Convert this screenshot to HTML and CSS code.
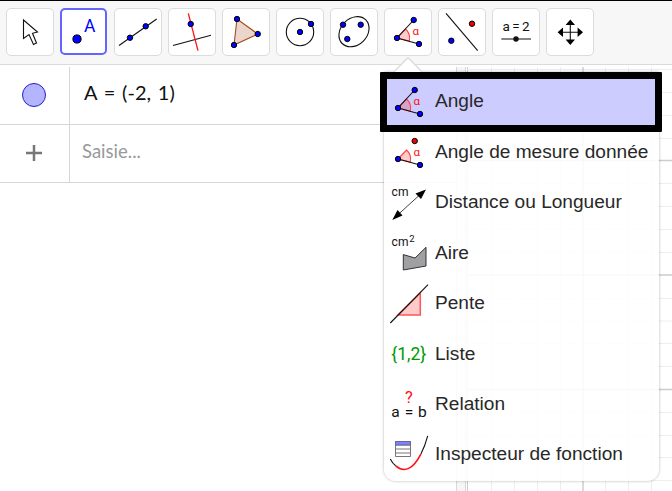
FILE: index.html
```html
<!DOCTYPE html>
<html lang="fr">
<head>
<meta charset="utf-8">
<title>GeoGebra</title>
<link rel="stylesheet" href="styles.css">
</head>
<body>
<div class="app">
  <header class="toolbar">
    <button class="tool"><svg viewBox="0 0 48 48"><path class="outline" d="M17.500 12V30.500L23 26.500L27.500 36.500L30.500 35L26.500 25.300L31.500 24Z"/></svg></button>
    <button class="tool selected"><svg viewBox="0 0 48 48"><circle class="pt" cx="17" cy="31" r="4.100"/><text class="blue" x="24" y="24" font-size="17.500" textLength="12">A</text></svg></button>
    <button class="tool"><svg viewBox="0 0 48 48"><path class="line" d="M5 37.500L42.700 11"/><circle class="pt" cx="16" cy="29.700" r="2.700"/><circle class="pt" cx="31.700" cy="18.300" r="2.700"/></svg></button>
    <button class="tool"><svg viewBox="0 0 48 48"><path class="line" d="M5 37.500L43 27.300"/><path class="redline" d="M20.300 5.300L30 42.700"/><circle class="pt" cx="22.700" cy="16" r="2.700"/></svg></button>
    <button class="tool"><svg viewBox="0 0 48 48"><path class="triangle" d="M15 11L35.700 26L12 37Z"/><circle class="pt" cx="15" cy="11" r="2.700"/><circle class="pt" cx="35.700" cy="26" r="2.700"/><circle class="pt" cx="12" cy="37" r="2.700"/></svg></button>
    <button class="tool"><svg viewBox="0 0 48 48"><circle class="line" cx="24" cy="24" r="13.700"/><circle class="pt" cx="24" cy="24" r="2.700"/><circle class="pt" cx="35" cy="16" r="2.700"/></svg></button>
    <button class="tool"><svg viewBox="0 0 48 48"><ellipse class="line" cx="24" cy="23.700" rx="16.700" ry="13.200" transform="rotate(-45 24 23.700)"/><circle class="pt" cx="13" cy="16.700" r="2.700"/><circle class="pt" cx="30.700" cy="16.700" r="2.700"/><circle class="pt" cx="17.300" cy="31" r="2.700"/></svg></button>
    <button class="tool"><svg viewBox="0 0 48 48"><path class="sector" d="M13 30L21.500 21A12.500 12.500 0 0 1 25.300 33Z"/><path class="line" d="M29.700 12L13 30L35 36"/><circle class="pt" cx="13" cy="30" r="2.700"/><circle class="pt" cx="29.700" cy="12" r="2.700"/><circle class="pt" cx="35" cy="36" r="2.700"/><text class="red alpha" x="28.500" y="27.300">α</text></svg></button>
    <button class="tool"><svg viewBox="0 0 48 48"><path class="line" d="M8 5.300L39.700 42.700"/><circle class="pt rpt" cx="34" cy="15.700" r="2.700"/><circle class="pt" cx="13.300" cy="32.700" r="2.700"/></svg></button>
    <button class="tool"><svg viewBox="0 0 48 48"><text x="10.500" y="22.800" font-size="13.500" textLength="27">a=2</text><path class="slider" d="M9.300 31H39"/><circle cx="24" cy="31" r="2.700" fill="#111"/></svg></button>
    <button class="tool"><svg viewBox="0 0 48 48"><path class="line" d="M24.300 15V34M15 24.300H34"/><path d="M24.300 11.500L29 17H19.600ZM24.300 37L29 31.500H19.600ZM11.600 24.300L17 19.600V29ZM37 24.300L31.600 19.600V29Z"/></svg></button>
  </header>

  <main class="workspace">
    <section class="algebra">
      <div class="row">
        <div class="marker"><span class="bullet"></span></div>
        <div class="formula">A = (-2, 1)</div>
      </div>
      <div class="row input-row">
        <div class="marker"><svg class="plus" viewBox="0 0 18 18"><path d="M1 9H17M9 1V17"/></svg></div>
        <div class="placeholder">Saisie...</div>
      </div>
    </section>
    <div class="splitter"></div>
    <section class="graphics">
      <svg viewBox="467 65 205 426">
        <path class="minor" d="M491.500 67V491M514.500 67V491M537.500 67V491M560.500 67V491M605.500 67V491M628.500 67V491M651.500 67V491M467 69.500H672M467 92.500H672M467 115.500H672M467 138.500H672M467 183.500H672M467 206.500H672M467 229.500H672M467 252.500H672M467 298.500H672M467 321H672M467 343.500H672M467 366.500H672M467 412.500H672M467 435.500H672M467 457.500H672M467 480.500H672"/>
        <path class="major" d="M583 67V491M467 160.500H672M467 275H672M467 389.500H672"/>
      </svg>
    </section>
  </main>

  <nav class="menu">
    <svg class="caret" viewBox="0 0 32 16"><path d="M1 16L14.500 2Q16 .5 17.500 2L31 16"/></svg>
    <div class="item active"><svg viewBox="0 0 48 48"><path class="sector" d="M13 30L21.500 21A12.500 12.500 0 0 1 25.300 33Z"/><path class="line" d="M29.700 12L13 30L35 36"/><circle class="pt" cx="13" cy="30" r="2.700"/><circle class="pt" cx="29.700" cy="12" r="2.700"/><circle class="pt" cx="35" cy="36" r="2.700"/><text class="red alpha" x="28.500" y="27.300">α</text></svg><span>Angle</span></div>
    <div class="item"><svg viewBox="0 0 48 48"><path class="sector" d="M13 30L21.500 21A12.500 12.500 0 0 1 25.300 33Z"/><path class="line" d="M13 30L35 36"/><circle class="pt" cx="13" cy="30" r="2.700"/><circle class="pt rpt" cx="29.700" cy="12" r="2.700"/><circle class="pt" cx="35" cy="36" r="2.700"/><text class="red alpha" x="28.500" y="27.300">α</text></svg><span>Angle de mesure donnée</span></div>
    <div class="item"><svg viewBox="0 0 48 48"><text x="6.500" y="17" font-size="12" textLength="17">cm</text><path class="line thin" d="M9 39.300L39 12"/><path d="M41 10.500L36 20L30.500 14.500ZM7.300 41L17.500 36.500L12.500 31Z"/></svg><span>Distance ou Longueur</span></div>
    <div class="item"><svg viewBox="0 0 48 48"><text x="6.500" y="17" font-size="12" textLength="17">cm</text><text x="24.300" y="13.300" font-size="9.500">2</text><path class="area" d="M18.300 25.600L30 29L41 18.300V37L18.300 41Z"/></svg><span>Aire</span></div>
    <div class="item"><svg viewBox="0 0 48 48"><path class="slope" d="M13 35H35.300V13Z"/><path class="line" d="M5.300 43L43 4.700"/></svg><span>Pente</span></div>
    <div class="item"><svg viewBox="0 0 48 48"><text class="green" x="6.300" y="30" font-size="18" textLength="35" lengthAdjust="spacingAndGlyphs">{1,2}</text></svg><span>Liste</span></div>
    <div class="item"><svg viewBox="0 0 48 48"><text class="red" x="20" y="22" font-size="16.500">?</text><text x="6.300" y="36" font-size="15.500" textLength="35.500">a=b</text></svg><span>Relation</span></div>
    <div class="item"><svg viewBox="0 0 48 48"><path class="table" d="M10.500 10.500H25.500V25.500H10.500ZM10.500 14H25.500M10.500 18H25.500M10.500 22H25.500"/><path class="table-head" d="M10.500 10.500H25.500V14H10.500Z"/><path class="line" d="M5.300 28Q7.500 32.500 10.700 34.800M36 22.800Q40 15 42.700 4.800"/><path class="redline curve" d="M10.700 34.800Q24 46 36 22.800"/></svg><span>Inspecteur de fonction</span></div>
    <div class="highlight"></div>
  </nav>
</div>
</body>
</html>
```
FILE: styles.css
```css
* { box-sizing: border-box; }
body { margin: 0; background: #fff; font-family: "Liberation Sans", sans-serif; }
.app { position: relative; width: 672px; height: 491px; overflow: hidden; display: flex; flex-direction: column; }
.toolbar { height: 65px; flex: none; display: flex; gap: 6px; padding: 7px 6px; background: #f7f7f7; border-top: 1px solid #000; border-bottom: 1px solid #dadada; }
.tool { width: 48px; height: 48px; padding: 0; background: #fff; border: 1px solid #dcdcdc; border-radius: 5px; }
.tool svg { display: block; width: 48px; height: 48px; margin: -1px; }
.tool.selected { width: 47px; height: 47px; margin-right: 1px; border: 2px solid #6464ff; }
.tool.selected svg { margin: -2px; }
svg text { font-family: Roboto, sans-serif; fill: #111; }
svg .blue { fill: #0000ff; }
svg .red { fill: #ff1010; }
svg .green { fill: #009900; }
.alpha { font-size: 11.500px; }
.line { fill: none; stroke: #111; stroke-width: 1.1; }
.thin { stroke-width: .8; }
.outline { fill: #fff; stroke: #111; stroke-width: 1.1; }
.redline { fill: none; stroke: #f11; stroke-width: 1.3; }
.curve { stroke-width: 1.6; }
.pt { fill: #0000ff; stroke: #000; stroke-width: 1; }
.rpt { fill: #f00000; }
.triangle { fill: #ead6cd; stroke: #a64a16; stroke-width: 1.1; }
.sector { fill: rgba(255, 0, 0, .2); stroke: #ff4040; stroke-width: 1.1; }
.slider { stroke: #666; stroke-width: 1.600; }
.area { fill: #a0a0a3; stroke: #333; stroke-width: 1; }
.slope { fill: #ffcaca; stroke: #ff5555; stroke-width: 1.5; }
.table { fill: #fff; stroke: #777; stroke-width: 1; }
.table-head { fill: #8080ff; stroke: #666699; stroke-width: 1; }

.workspace { flex: 1; display: flex; min-height: 0; padding-top: 2px; }
.algebra { width: 456px; }
.row { display: flex; height: 58px; border-bottom: 1px solid #d6d6d6; }
.marker { width: 70px; border-right: 1px solid #d6d6d6; display: flex; align-items: center; justify-content: center; padding: 0 2px 2px 0; }
.bullet { width: 24px; height: 24px; margin-left: 1px; border-radius: 50%; background: #b4b4ff; border: 1px solid #2020d0; }
.plus { width: 18px; height: 18px; }
.plus path { stroke: #777; stroke-width: 2.5; }
.formula, .placeholder { font-family: Lato, sans-serif; line-height: 24px; white-space: pre; }
.formula { padding: 13px 0 0 14px; font-size: 20px; word-spacing: 1.700px; color: #111; }
.placeholder { padding: 14px 0 0 12px; font-size: 18.500px; color: #999; }
.splitter { width: 11px; background: linear-gradient(90deg, #d8d8d8 1px, #f6f6f6 1px, #f6f6f6 9px, #d8d8d8 9px, #d8d8d8 10px, #fff 10px); }
.graphics { width: 205px; border-left: 1px solid #ccc; }
.graphics svg { display: block; width: 205px; height: 426px; margin: -2px 0 0 -1px; }
.minor { fill: none; stroke: #eee; stroke-width: 1; }
.major { fill: none; stroke: #ccc; stroke-width: 1.4; }

.menu { position: absolute; left: 384px; top: 72px; width: 274.500px; height: 409px; padding: 5px 0 0 1px; background: rgba(255, 255, 255, .88); border-radius: 0 0 12px 12px; box-shadow: 0 0 3px rgba(0, 0, 0, .3); }
.caret { position: absolute; left: 8px; top: -15px; width: 32px; height: 16px; }
.caret path { fill: #fff; stroke: #ddd; stroke-width: 1.500; }
.item { height: 50.400px; display: flex; align-items: center; gap: 2px; position: relative; z-index: 1; }
.item svg { flex: none; width: 48px; height: 48px; }
.item span { font-size: 19.100px; line-height: 24px; color: #282828; white-space: nowrap; margin-top: -1px; }
.item.active span { margin-top: -3px; }
.highlight { position: absolute; left: -4px; top: 0; width: 282px; height: 60px; background: #ccf; border: solid #000; border-width: 7px; border-radius: 1px; }
```
